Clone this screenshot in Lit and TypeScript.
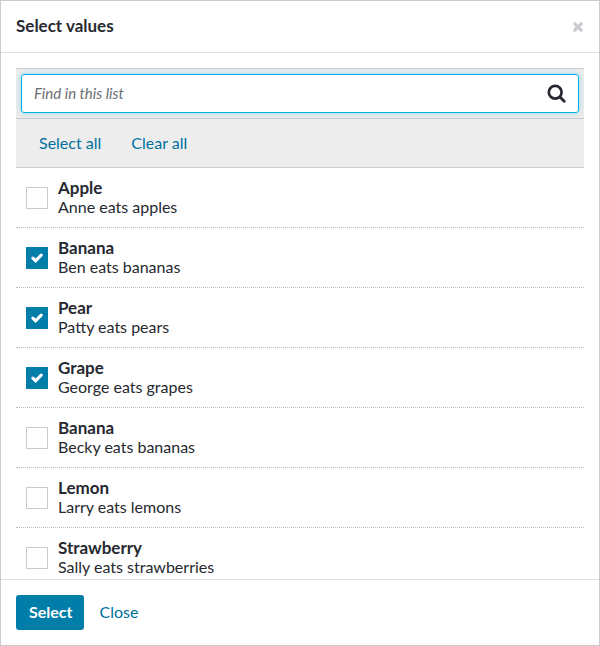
import { LitElement, html, css, svg } from "lit";
import { customElement, property, state } from "lit/decorators.js";

interface Item {
  name: string;
  detail: string;
  checked: boolean;
}

@customElement("value-row")
class ValueRow extends LitElement {
  @property() name = "";
  @property() detail = "";
  @property({ type: Boolean }) checked = false;

  static styles = css`
    :host {
      display: block;
    }
    .row {
      display: flex;
      align-items: center;
      gap: 10px;
      height: 60px;
      box-sizing: border-box;
      padding: 0 10px;
      border-bottom: 1px dotted #b9babe;
      cursor: pointer;
    }
    .tick {
      display: grid;
      place-items: center;
    }
    .box,
    .mark {
      grid-area: 1 / 1;
    }
    .box {
      appearance: none;
      width: 22px;
      height: 22px;
      margin: 0;
      background: #fff;
      border: 1px solid #cacbcf;
    }
    .box:checked {
      background: #007da8;
      border-color: #007da8;
    }
    .mark {
      width: 12px;
      height: 10px;
      pointer-events: none;
    }
    .text {
      display: flex;
      flex-direction: column;
      padding-bottom: 2px;
      line-height: 19px;
    }
    .name {
      font-size: 17px;
      font-weight: 700;
    }
  `;

  private toggle(e: Event) {
    this.checked = (e.target as HTMLInputElement).checked;
  }

  render() {
    return html`<label class="row">
      <span class="tick">
        <input class="box" type="checkbox" .checked=${this.checked} @change=${this.toggle} />
        <svg class="mark" viewBox="0 0 12 10" aria-hidden="true">
          ${this.checked
            ? svg`<path d="M1.9 5.1 4.6 7.8 10.2 2.2" fill="none" stroke="#fff" stroke-width="3.1" stroke-linecap="round" />`
            : null}
        </svg>
      </span>
      <span class="text">
        <span class="name">${this.name}</span>
        <span class="detail">${this.detail}</span>
      </span>
    </label>`;
  }
}

@customElement("app-root")
class AppRoot extends LitElement {
  @state() items: Item[] = [
    { name: "Apple", detail: "Anne eats apples", checked: false },
    { name: "Banana", detail: "Ben eats bananas", checked: true },
    { name: "Pear", detail: "Patty eats pears", checked: true },
    { name: "Grape", detail: "George eats grapes", checked: true },
    { name: "Banana", detail: "Becky eats bananas", checked: false },
    { name: "Lemon", detail: "Larry eats lemons", checked: false },
    { name: "Strawberry", detail: "Sally eats strawberries", checked: false },
  ];

  static styles = css`
    :host {
      display: flex;
      flex-direction: column;
      height: 100vh;
      box-sizing: border-box;
      border: 1px solid #cbcbd0;
      background: #fff;
      color: #26292f;
      font: 16px/20px Lato, sans-serif;
    }
    .header {
      display: flex;
      align-items: center;
      justify-content: space-between;
      padding: 15px;
      border-bottom: 1px solid #e0e1e3;
    }
    .title {
      margin: 0;
      padding-bottom: 2px;
      font-size: 17px;
      line-height: 19px;
      font-weight: 700;
    }
    button {
      font: inherit;
      border: 0;
      background: none;
      cursor: pointer;
    }
    .dismiss {
      display: flex;
      padding: 0;
      color: #cacbce;
    }
    .content {
      flex: 1;
      min-height: 0;
      overflow: auto;
      scrollbar-width: none;
      padding: 15px 15px 0;
    }
    .search {
      padding: 5px;
      background: #ededed;
      border-top: 1px solid #c9cbd0;
      border-bottom: 1px solid #c9cbd0;
    }
    .field {
      display: flex;
      align-items: center;
      height: 39px;
      box-sizing: border-box;
      padding: 0 12px;
      background: #fff;
      border: 1px solid #00b0ea;
      border-radius: 3px;
      box-shadow: 0 0 6px #9fd6e8;
    }
    .query {
      flex: 1;
      min-width: 0;
      padding: 0 0 2px;
      border: 0;
      outline: 0;
      background: none;
      color: inherit;
      font: inherit;
      font-size: 15px;
    }
    .query::placeholder {
      color: #6b6e75;
      font-style: italic;
      opacity: 1;
    }
    .bar {
      display: flex;
      gap: 30px;
      padding: 14px 23px;
      background: #ededed;
      border-bottom: 1px solid #c9cbd0;
    }
    .link {
      padding: 0;
      color: #00719c;
    }
    .footer {
      display: flex;
      align-items: center;
      gap: 15px;
      padding: 15px;
      border-top: 1px solid #e0e1e3;
    }
    .footer .link {
      padding-bottom: 2px;
    }
    .primary {
      height: 35px;
      padding: 0 12px 2px 13px;
      border-radius: 3px;
      background: #007da8;
      color: #fff;
      font-weight: 700;
    }
  `;

  private setAll(checked: boolean) {
    this.items = this.items.map((i) => ({ ...i, checked }));
  }

  render() {
    return html`
      <header class="header">
        <h1 class="title">Select values</h1>
        <button class="dismiss" aria-label="Dismiss">
          <svg width="12" height="12" viewBox="0 0 12 12" aria-hidden="true">
            <path d="M2.8 2.8 9.2 9.2M9.2 2.8 2.8 9.2" stroke="currentColor" stroke-width="3.2" stroke-linecap="round" />
          </svg>
        </button>
      </header>
      <main class="content">
        <div class="search">
          <div class="field">
            <input class="query" type="text" placeholder="Find in this list" aria-label="Find in this list" />
            <svg width="19" height="19" viewBox="0 0 19 19" fill="none" stroke="#26292f" aria-hidden="true">
              <circle cx="8.2" cy="8.2" r="6.4" stroke-width="2.7" />
              <path d="M13 13 17.2 17.2" stroke-width="2.9" stroke-linecap="round" />
            </svg>
          </div>
        </div>
        <div class="bar">
          <button class="link" @click=${() => this.setAll(true)}>Select all</button>
          <button class="link" @click=${() => this.setAll(false)}>Clear all</button>
        </div>
        ${this.items.map(
          (i) => html`<value-row .name=${i.name} .detail=${i.detail} .checked=${i.checked}></value-row>`
        )}
      </main>
      <footer class="footer">
        <button class="primary">Select</button>
        <button class="link">Close</button>
      </footer>
    `;
  }
}
